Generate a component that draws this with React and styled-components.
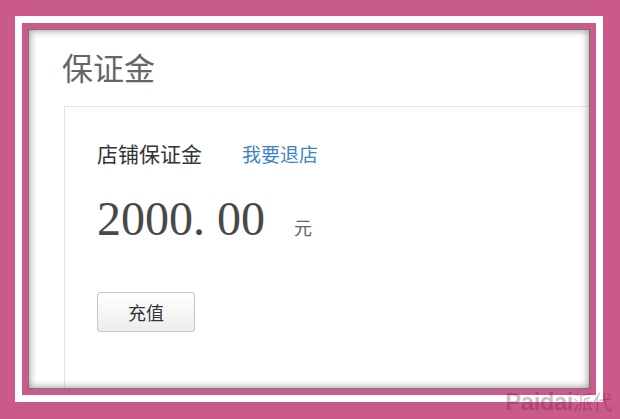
import React from "react";
import styled, { createGlobalStyle } from "styled-components";

const Global = createGlobalStyle`
  html, body { margin: 0; padding: 0; }
  body {
    background: #c95a8b;
    font-family: "Noto Sans CJK SC", "Noto Sans", sans-serif;
    width: 620px;
    height: 419px;
    overflow: hidden;
  }
`;

const Stage = styled.div`
  position: relative;
  width: 620px;
  height: 419px;
  padding: 16px 0 0 15px;
  box-sizing: border-box;
`;

const WhiteFrame = styled.div`
  width: 588px;
  height: 386px;
  box-sizing: border-box;
  background: #ffffff;
  padding: 7px;
`;

const PinkMat = styled.div`
  height: 100%;
  box-sizing: border-box;
  background: #c95a8b;
  padding: 6px;
`;

const Panel = styled.div`
  position: relative;
  height: 100%;
  box-sizing: border-box;
  background: #ffffff;
  overflow: hidden;
  display: flex;
  flex-direction: column;
  padding: 19px 0 0 36px;
  &::after {
    content: "";
    position: absolute;
    inset: 0;
    pointer-events: none;
    box-shadow: inset 0 0 0 1px rgba(60, 60, 60, 0.55),
      inset 0 0 7px 2px rgba(0, 0, 0, 0.38);
  }
`;

const Title = styled.h1`
  margin: 0 0 21px -2px;
  font-size: 31px;
  line-height: 37px;
  font-weight: 400;
  color: #666666;
`;

const Card = styled.div`
  flex: 1;
  border-top: 1px solid #e8e8e8;
  border-left: 1px solid #e6e6e6;
  padding: 31px 0 0 32px;
  display: flex;
  flex-direction: column;
  align-items: flex-start;
`;

const LabelRow = styled.div`
  display: flex;
  align-items: center;
  height: 30px;
`;

const Label = styled.span`
  font-size: 21px;
  color: #333333;
`;

const Link = styled.a`
  margin-left: 40px;
  font-size: 19px;
  color: #3d84c6;
  text-decoration: none;
  cursor: pointer;
`;

const AmountRow = styled.div`
  margin-top: 23px;
  display: flex;
  align-items: baseline;
  height: 56px;
`;

const Amount = styled.span`
  font-family: "Liberation Serif", "Times New Roman", serif;
  font-size: 48px;
  line-height: 56px;
  color: #484848;
  white-space: pre;
`;

const Unit = styled.span`
  margin-left: 29px;
  font-size: 18px;
  color: #666666;
`;

const Button = styled.button`
  margin-top: 45px;
  width: 98px;
  height: 40px;
  box-sizing: border-box;
  border: 1px solid #c6c6c6;
  border-radius: 3px;
  background: linear-gradient(#ffffff, #ececec);
  font-family: "Noto Sans CJK SC", sans-serif;
  font-size: 18px;
  color: #333333;
  padding: 0;
  cursor: pointer;
`;

const Watermark = styled.div`
  position: absolute;
  right: 8px;
  bottom: 3px;
  font-family: "Liberation Sans", Arial, sans-serif;
  font-weight: 700;
  font-size: 24px;
  letter-spacing: -0.5px;
  color: rgba(95, 25, 55, 0.3);
  span {
    font-family: "Noto Sans CJK SC", sans-serif;
    font-weight: 400;
    font-size: 20px;
  }
`;

export default function App() {
  return (
    <>
      <Global />
      <Stage>
        <WhiteFrame>
          <PinkMat>
            <Panel>
              <Title>保证金</Title>
              <Card>
                <LabelRow>
                  <Label>店铺保证金</Label>
                  <Link>我要退店</Link>
                </LabelRow>
                <AmountRow>
                  <Amount>2000. 00</Amount>
                  <Unit>元</Unit>
                </AmountRow>
                <Button>充值</Button>
              </Card>
            </Panel>
          </PinkMat>
        </WhiteFrame>
        <Watermark>
          Paidai<span>派代</span>
        </Watermark>
      </Stage>
    </>
  );
}
